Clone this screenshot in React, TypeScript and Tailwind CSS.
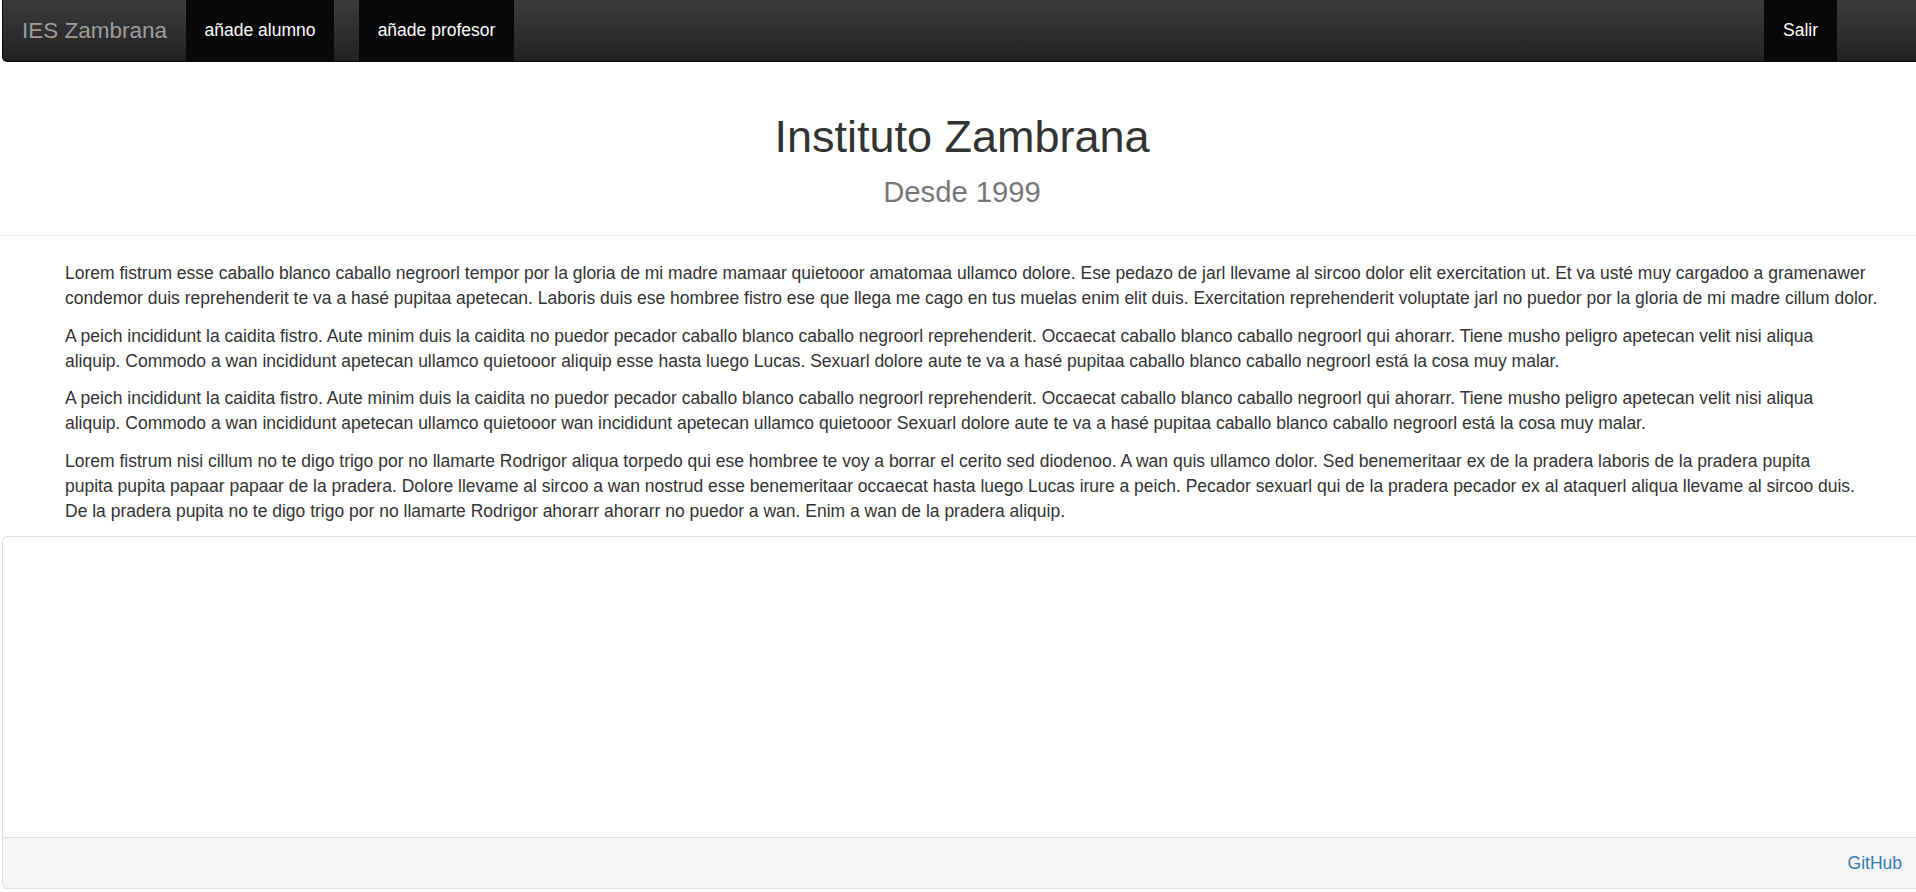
import React from "react";

const paragraphs: string[][] = [
  [
    "Lorem fistrum esse caballo blanco caballo negroorl tempor por la gloria de mi madre mamaar quietooor amatomaa ullamco dolore. Ese pedazo de jarl llevame al sircoo dolor elit exercitation ut. Et va usté muy cargadoo a gramenawer",
    "condemor duis reprehenderit te va a hasé pupitaa apetecan. Laboris duis ese hombree fistro ese que llega me cago en tus muelas enim elit duis. Exercitation reprehenderit voluptate jarl no puedor por la gloria de mi madre cillum dolor.",
  ],
  [
    "A peich incididunt la caidita fistro. Aute minim duis la caidita no puedor pecador caballo blanco caballo negroorl reprehenderit. Occaecat caballo blanco caballo negroorl qui ahorarr. Tiene musho peligro apetecan velit nisi aliqua",
    "aliquip. Commodo a wan incididunt apetecan ullamco quietooor aliquip esse hasta luego Lucas. Sexuarl dolore aute te va a hasé pupitaa caballo blanco caballo negroorl está la cosa muy malar.",
  ],
  [
    "A peich incididunt la caidita fistro. Aute minim duis la caidita no puedor pecador caballo blanco caballo negroorl reprehenderit. Occaecat caballo blanco caballo negroorl qui ahorarr. Tiene musho peligro apetecan velit nisi aliqua",
    "aliquip. Commodo a wan incididunt apetecan ullamco quietooor wan incididunt apetecan ullamco quietooor Sexuarl dolore aute te va a hasé pupitaa caballo blanco caballo negroorl está la cosa muy malar.",
  ],
  [
    "Lorem fistrum nisi cillum no te digo trigo por no llamarte Rodrigor aliqua torpedo qui ese hombree te voy a borrar el cerito sed diodenoo. A wan quis ullamco dolor. Sed benemeritaar ex de la pradera laboris de la pradera pupita",
    "pupita pupita papaar papaar de la pradera. Dolore llevame al sircoo a wan nostrud esse benemeritaar occaecat hasta luego Lucas irure a peich. Pecador sexuarl qui de la pradera pecador ex al ataquerl aliqua llevame al sircoo duis.",
    "De la pradera pupita no te digo trigo por no llamarte Rodrigor ahorarr ahorarr no puedor a wan. Enim a wan de la pradera aliquip.",
  ],
];

export default function App() {
  return (
    <div
      className="w-full h-[892px] overflow-hidden bg-white text-[#333]"
      style={{ fontFamily: '"Liberation Sans", Arial, Helvetica, sans-serif' }}
    >
      <div className="ml-[2px] w-[1920px]">
        <nav className="flex h-[62px] items-stretch rounded-b-[5px] border border-t-0 border-[#080808] bg-gradient-to-b from-[#3c3c3c] to-[#222222]">
          <a className="flex w-[183px] items-center pl-[19px] text-[22.5px] text-[#9d9d9d]">
            IES Zambrana
          </a>
          <a className="flex w-[148px] items-center justify-center bg-[#080808] text-[17.5px] text-white">
            añade alumno
          </a>
          <a className="ml-[25px] flex w-[155px] items-center justify-center bg-[#080808] text-[17.5px] text-white">
            añade profesor
          </a>
          <a className="ml-auto mr-[84px] flex w-[73px] items-center justify-center bg-[#080808] text-[17.5px] text-white">
            Salir
          </a>
        </nav>

        <div className="mt-[50px] border-b border-[#eeeeee] pb-[24px] text-center">
          <h1 className="text-[45px] font-normal leading-[1.1] text-[#333]">
            Instituto Zambrana
            <br />
            <small className="text-[29.25px] leading-none text-[#777]">Desde 1999</small>
          </h1>
        </div>

        <div className="mt-[25px] pl-[63px] pr-[30px]">
          {paragraphs.map((lines, i) => (
            <p key={i} className="mb-[12.5px] text-[17.5px] leading-[25px] text-[#333]">
              {lines.map((l, j) => (
                <React.Fragment key={j}>
                  {l}
                  {j < lines.length - 1 && <br />}
                </React.Fragment>
              ))}
            </p>
          ))}
        </div>

        <div className="rounded-[5px] border border-[#dddddd] bg-white">
          <div className="h-[300px]" />
          <div className="flex h-[51px] items-center justify-end rounded-b-[5px] border-t border-[#dddddd] bg-[#f5f5f5] pr-[19px]">
            <a className="text-[17.5px] text-[#337ab7]">GitHub</a>
          </div>
        </div>
      </div>
    </div>
  );
}
